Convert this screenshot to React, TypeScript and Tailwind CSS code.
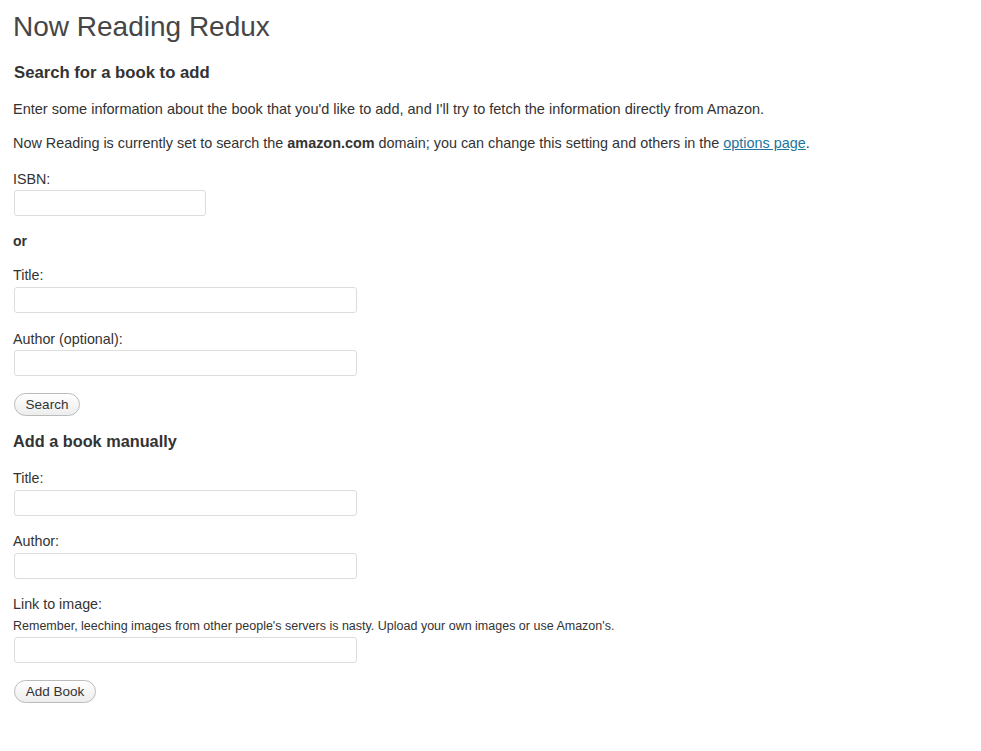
import React from "react";

const font = { fontFamily: '"Liberation Sans", Arial, sans-serif' };

function Input({ w }: { w: string }) {
  return (
    <input
      type="text"
      className={`${w} h-[26px] ml-[1px] border border-[#dddddd] rounded-[3px] bg-white outline-none`}
    />
  );
}

function Btn({ label, w }: { label: string; w: string }) {
  return (
    <button
      className={`${w} h-[23px] ml-[1px] rounded-full border border-[#bbbbbb] bg-gradient-to-b from-white to-[#ededed] text-[13.5px] leading-[21px] text-[#333333] text-center`}
    >
      {label}
    </button>
  );
}

export default function App() {
  return (
    <div className="min-h-[751px] bg-white text-[#333333]" style={font}>
      <div className="pl-[13px] flex flex-col items-start">
        <h2 className="mt-[10px] text-[28px] leading-[34px] text-[#464646] font-normal">Now Reading Redux</h2>
        <h3 className="mt-[19px] text-[16.7px] leading-[20px] font-bold ml-[1px]">Search for a book to add</h3>
        <p className="mt-[17px] text-[14.5px] leading-[18px]">
          Enter some information about the book that you'd like to add, and I'll try to fetch the information directly from Amazon.
        </p>
        <p className="mt-[16px] text-[14.4px] leading-[18px]">
          Now Reading is currently set to search the <b>amazon.com</b> domain; you can change this setting and others in the{" "}
          <a className="text-[#21759b] underline" href="#">options page</a>.
        </p>
        <label className="mt-[18px] text-[14.3px] leading-[18px]">ISBN:</label>
        <div className="mt-[2px]"><Input w="w-[192px]" /></div>
        <p className="mt-[16px] text-[14px] leading-[18px] font-bold">or</p>
        <label className="mt-[16px] text-[14.3px] leading-[18px]">Title:</label>
        <div className="mt-[3px]"><Input w="w-[343px]" /></div>
        <label className="mt-[17px] text-[14.3px] leading-[18px]">Author (optional):</label>
        <div className="mt-[2px]"><Input w="w-[343px]" /></div>
        <div className="mt-[16px]"><Btn label="Search" w="w-[66px]" /></div>
        <h3 className="mt-[15px] text-[16.3px] leading-[20px] font-bold">Add a book manually</h3>
        <label className="mt-[18px] text-[14.3px] leading-[18px]">Title:</label>
        <div className="mt-[3px]"><Input w="w-[343px]" /></div>
        <label className="mt-[16px] text-[14.3px] leading-[18px]">Author:</label>
        <div className="mt-[3px]"><Input w="w-[343px]" /></div>
        <label className="mt-[16px] text-[14.3px] leading-[18px]">Link to image:</label>
        <p className="mt-[6px] text-[12.5px] leading-[14px]">
          Remember, leeching images from other people's servers is nasty. Upload your own images or use Amazon's.
        </p>
        <div className="mt-[4px]"><Input w="w-[343px]" /></div>
        <div className="mt-[16px]"><Btn label="Add Book" w="w-[82px]" /></div>
      </div>
    </div>
  );
}
